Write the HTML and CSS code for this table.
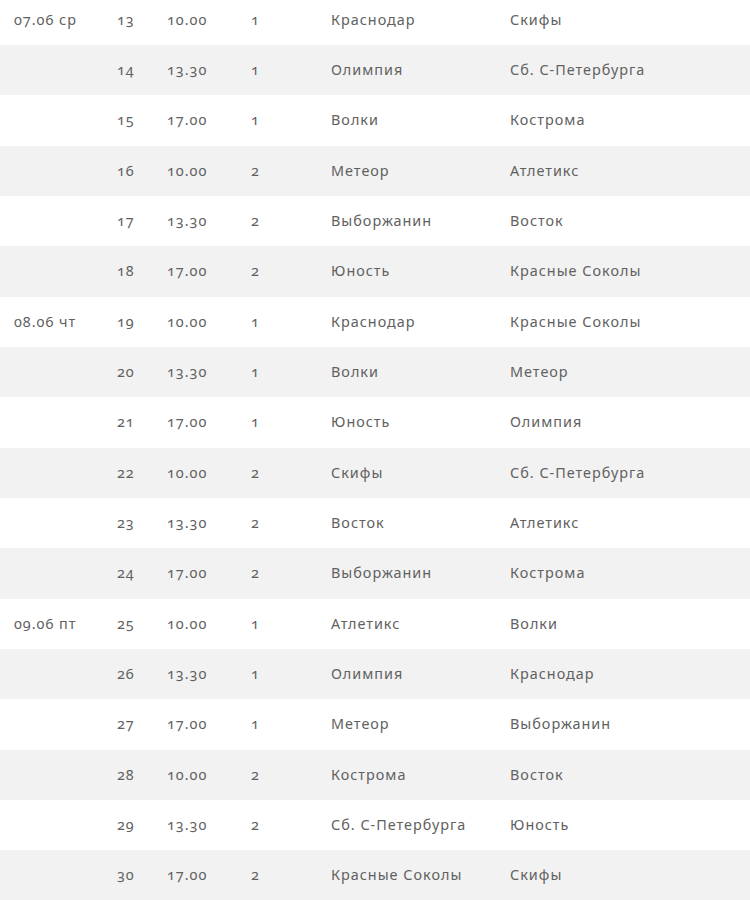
FILE: index.html
```html
<!DOCTYPE html>
<html lang="ru">
<head>
<meta charset="utf-8">
<link rel="stylesheet" href="styles.css">
</head>
<body>
<table class="schedule">
<tbody>
<tr><td class="date">07.06 ср</td><td class="num">13</td><td class="time">10.00</td><td class="field">1</td><td class="team">Краснодар</td><td class="team">Скифы</td></tr>
<tr><td class="date"></td><td class="num">14</td><td class="time">13.30</td><td class="field">1</td><td class="team">Олимпия</td><td class="team">Сб. С-Петербурга</td></tr>
<tr><td class="date"></td><td class="num">15</td><td class="time">17.00</td><td class="field">1</td><td class="team">Волки</td><td class="team">Кострома</td></tr>
<tr><td class="date"></td><td class="num">16</td><td class="time">10.00</td><td class="field">2</td><td class="team">Метеор</td><td class="team">Атлетикс</td></tr>
<tr><td class="date"></td><td class="num">17</td><td class="time">13.30</td><td class="field">2</td><td class="team">Выборжанин</td><td class="team">Восток</td></tr>
<tr><td class="date"></td><td class="num">18</td><td class="time">17.00</td><td class="field">2</td><td class="team">Юность</td><td class="team">Красные Соколы</td></tr>
<tr><td class="date">08.06 чт</td><td class="num">19</td><td class="time">10.00</td><td class="field">1</td><td class="team">Краснодар</td><td class="team">Красные Соколы</td></tr>
<tr><td class="date"></td><td class="num">20</td><td class="time">13.30</td><td class="field">1</td><td class="team">Волки</td><td class="team">Метеор</td></tr>
<tr><td class="date"></td><td class="num">21</td><td class="time">17.00</td><td class="field">1</td><td class="team">Юность</td><td class="team">Олимпия</td></tr>
<tr><td class="date"></td><td class="num">22</td><td class="time">10.00</td><td class="field">2</td><td class="team">Скифы</td><td class="team">Сб. С-Петербурга</td></tr>
<tr><td class="date"></td><td class="num">23</td><td class="time">13.30</td><td class="field">2</td><td class="team">Восток</td><td class="team">Атлетикс</td></tr>
<tr><td class="date"></td><td class="num">24</td><td class="time">17.00</td><td class="field">2</td><td class="team">Выборжанин</td><td class="team">Кострома</td></tr>
<tr><td class="date">09.06 пт</td><td class="num">25</td><td class="time">10.00</td><td class="field">1</td><td class="team">Атлетикс</td><td class="team">Волки</td></tr>
<tr><td class="date"></td><td class="num">26</td><td class="time">13.30</td><td class="field">1</td><td class="team">Олимпия</td><td class="team">Краснодар</td></tr>
<tr><td class="date"></td><td class="num">27</td><td class="time">17.00</td><td class="field">1</td><td class="team">Метеор</td><td class="team">Выборжанин</td></tr>
<tr><td class="date"></td><td class="num">28</td><td class="time">10.00</td><td class="field">2</td><td class="team">Кострома</td><td class="team">Восток</td></tr>
<tr><td class="date"></td><td class="num">29</td><td class="time">13.30</td><td class="field">2</td><td class="team">Сб. С-Петербурга</td><td class="team">Юность</td></tr>
<tr><td class="date"></td><td class="num">30</td><td class="time">17.00</td><td class="field">2</td><td class="team">Красные Соколы</td><td class="team">Скифы</td></tr>
</tbody>
</table>
</body>
</html>
```

FILE: styles.css
```css
html, body {
  margin: 0;
  padding: 0;
  background: #fff;
}
body {
  font-family: "Noto Sans", "Open Sans", sans-serif;
  font-size: 14.4px;
  color: #616161;
  letter-spacing: 1px;
  font-variant-numeric: oldstyle-nums;
  font-feature-settings: "onum" 1;
}
.schedule {
  width: 750px;
  border-collapse: collapse;
  table-layout: fixed;
  margin-top: -5.33px;
}
.schedule tr {
  height: 50.33px;
}
.schedule tr:nth-child(even) {
  background: #f2f2f2;
}
.schedule td {
  padding: 0 0 0 14px;
  vertical-align: middle;
  white-space: nowrap;
  line-height: 20px;
}
.date { width: 89px; }
.num { width: 36px; }
.time { width: 70px; }
.field { width: 66px; }
.team:nth-child(5) { width: 165px; }
```
